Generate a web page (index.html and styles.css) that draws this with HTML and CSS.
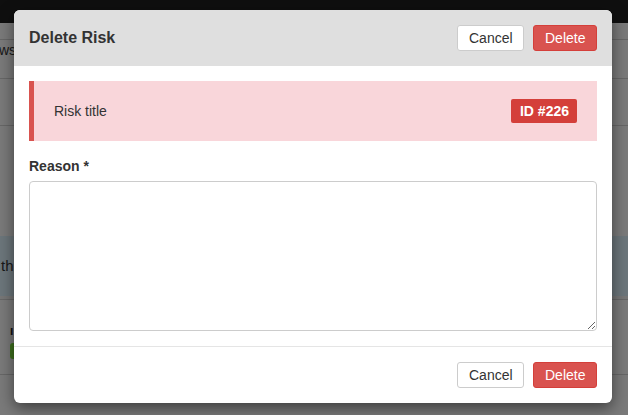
FILE: index.html
```html
<!DOCTYPE html>
<html>
<head>
<meta charset="utf-8">
<link rel="stylesheet" href="styles.css">
</head>
<body>
<div class="page">
  <div class="topbar"></div>
  <div class="row row-tabs">ws</div>
  <div class="row row-a"></div>
  <div class="row row-b"></div>
  <div class="info">th</div>
  <div class="row row-c"></div>
  <div class="row row-d">
    <div class="d-title">ıı</div>
    <div class="d-badge"></div>
  </div>
</div>
<div class="backdrop"></div>
<div class="modal">
  <div class="modal-header">
    <h4 class="modal-title">Delete Risk</h4>
    <div class="actions">
      <button class="btn btn-default">Cancel</button>
      <button class="btn btn-danger">Delete</button>
    </div>
  </div>
  <div class="modal-body">
    <div class="alert">
      <span class="alert-text">Risk title</span>
      <span class="badge">ID #226</span>
    </div>
    <label class="label">Reason *</label>
    <textarea class="reason"></textarea>
  </div>
  <div class="modal-footer">
    <button class="btn btn-default">Cancel</button>
    <button class="btn btn-danger">Delete</button>
  </div>
</div>
</body>
</html>
```
FILE: styles.css
```css
* { box-sizing: border-box; }
html, body { margin: 0; padding: 0; }
body {
  width: 628px;
  height: 415px;
  overflow: hidden;
  font-family: "Liberation Sans", Arial, sans-serif;
  font-size: 14px;
  color: #333;
  background: #f4f4f4;
}
.page { display: flex; flex-direction: column; }
.topbar { height: 23px; background: #1e1e1e; }
.row { border-bottom: 1px solid #cfcfcf; }
.row-tabs { height: 16px; margin-top: 22px; padding: 0; font-size: 14px; line-height: 16px; text-indent: -1px; border-bottom: 0; display: none; }
.row-tabs { display: block; height: 16px; margin-top: 0; padding-top: 19px; height: 16px; }
.row-a { height: 40px; border-top: 1px solid #cfcfcf; margin-top: -3px; }
.row-b { height: 47px; }
.info {
  margin-top: 110px;
  height: 60px;
  background: #d9edf7;
  color: #333;
  font-size: 15px;
  line-height: 60px;
  padding-left: 1px;
}
.row-c { height: 4px; border-bottom: 1px solid #cfcfcf; background: #eeeeee; }
.row-d { height: 75px; padding: 24px 0 0 10px; background: #f4f4f4; }
.d-title { font-weight: bold; font-size: 12px; line-height: 14px; color: #222; letter-spacing: 1px; }
.d-badge { margin-top: 5px; width: 30px; height: 16px; background: #7fe43c; border-radius: 3px; }

.backdrop {
  position: absolute;
  inset: 0;
  background: rgba(0, 0, 0, 0.5);
}
.modal {
  position: absolute;
  left: 14px;
  top: 10px;
  width: 598px;
  height: 393px;
  background: #fff;
  border-radius: 6px;
  box-shadow: 0 5px 15px rgba(0, 0, 0, 0.5);
  overflow: hidden;
  display: flex;
  flex-direction: column;
}
.modal-header {
  height: 56px;
  background: #dfdfdf;
  padding: 0 15px;
  display: flex;
  align-items: center;
  justify-content: space-between;
}
.modal-title {
  margin: 0;
  font-size: 16px;
  font-weight: bold;
  color: #333;
}
.actions { display: flex; gap: 9px; }
.btn {
  font-family: "Liberation Sans", Arial, sans-serif;
  font-size: 14px;
  height: 26px;
  line-height: 24px;
  padding: 0 11px;
  border-radius: 3px;
  border: 1px solid #ccc;
  cursor: pointer;
}
.btn-default { background: #fff; color: #333; width: 67px; }
.btn-danger { background: #d9534f; border-color: #d43f3a; color: #fff; width: 64px; }

.modal-body {
  padding: 15px;
  display: flex;
  flex-direction: column;
}
.alert {
  height: 60px;
  background: #f9d6da;
  border-left: 5px solid #d9534f;
  padding: 0 20px;
  display: flex;
  align-items: center;
  justify-content: space-between;
  margin-bottom: 15px;
}
.alert-text { font-size: 14px; color: #333; }
.badge {
  background: #d43f3a;
  color: #fff;
  font-weight: bold;
  font-size: 14px;
  height: 24px;
  line-height: 24px;
  padding: 0 8px 0 9px;
  border-radius: 2px;
}
.label {
  font-weight: bold;
  font-size: 14px;
  line-height: 20px;
  margin-bottom: 5px;
  color: #333;
}
.reason {
  height: 150px;
  width: 100%;
  border: 1px solid #ccc;
  border-radius: 4px;
  resize: vertical;
  font-family: "Liberation Sans", Arial, sans-serif;
  font-size: 14px;
  display: block;
}
.modal-footer {
  border-top: 1px solid #e5e5e5;
  padding: 15px;
  display: flex;
  justify-content: flex-end;
  gap: 9px;
}
```
